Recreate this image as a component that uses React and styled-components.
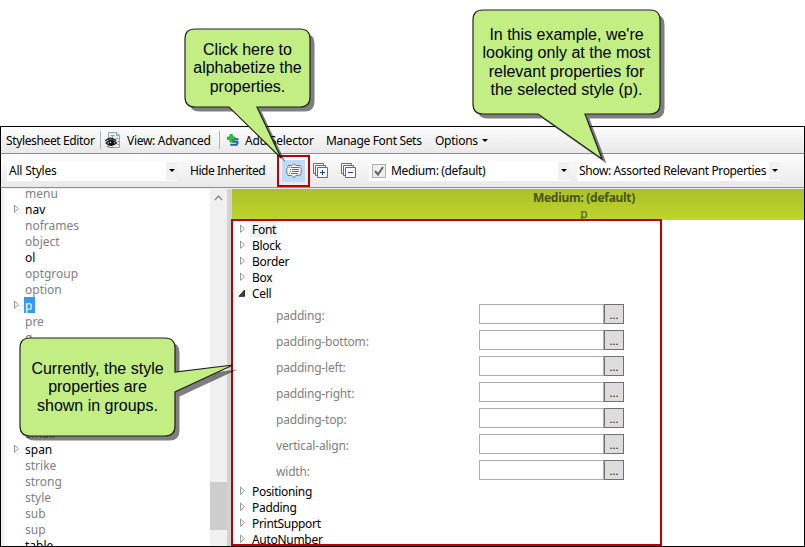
import React from "react";
import styled, { createGlobalStyle } from "styled-components";

const GlobalStyle = createGlobalStyle`
  * { box-sizing: border-box; }
  html, body { margin: 0; background: #fff; overflow: hidden; }
  body { font-family: "Noto Sans", "Open Sans", sans-serif; font-size: 12px; color: #000; }
`;

const Page = styled.main`
  position: relative;
  width: 805px;
  height: 547px;
  padding-top: 126px;
  overflow: hidden;
`;

const EditorWindow = styled.section`
  display: flex;
  flex-direction: column;
  height: 421px;
  border: 1px solid #000;
`;

const MenuBar = styled.header`
  display: flex;
  align-items: center;
  flex: none;
  height: 27px;
  padding-left: 5px;
  background: linear-gradient(#fdfdfd, #e9e9ea);
  border-bottom: 1px solid #8d8d8d;
`;

const ToolBar = styled.div`
  display: flex;
  align-items: center;
  flex: none;
  height: 34px;
  padding-left: 6px;
  background: linear-gradient(#fdfdfd, #e9e9ea);
  border-bottom: 1px solid #8d8d8d;
`;

const Text = styled.span`
  flex: none;
  width: ${(p) => (p.$w ? `${p.$w}px` : "auto")};
  margin-left: ${(p) => p.$gap || 0}px;
  padding-top: 1px;
  line-height: 16px;
  white-space: nowrap;
  letter-spacing: ${(p) => p.$track ?? -0.2}px;
`;

const Separator = styled.i`
  flex: none;
  width: 1px;
  height: 18px;
  margin-left: ${(p) => p.$gap}px;
  background: #a9b2bd;
`;

const Icon = styled.svg`
  flex: none;
  display: block;
  margin-left: ${(p) => p.$gap || 0}px;
`;

const Combo = styled.div`
  display: flex;
  align-items: center;
  flex: none;
  width: ${(p) => p.$w}px;
  height: 20px;
  margin-left: ${(p) => p.$gap || 0}px;
  padding-left: ${(p) => p.$pad}px;
  background: #fff;
`;

const DropButton = styled.span`
  display: flex;
  flex: none;
  justify-content: center;
  align-items: center;
  width: 11px;
  height: 18px;
  margin-left: auto;
  background: #f1f1f1;
`;

const Caret = styled.i`
  width: 0;
  height: 0;
  margin-left: ${(p) => p.$gap || 0}px;
  border: 3px solid transparent;
  border-top-color: #000;
  border-bottom: 0;
`;

const ActiveTool = styled.button`
  display: flex;
  flex: none;
  align-items: center;
  justify-content: center;
  width: 33px;
  height: 32px;
  margin-left: 12px;
  padding: 3px;
  border: 2px solid #c00000;
  background: #bfdcf7 content-box;
`;

const CheckBox = styled.span`
  flex: none;
  width: 14px;
  height: 14px;
  border: 1px solid #b0b0b0;
  background: #eee;
`;

const Body = styled.div`
  display: flex;
  flex: 1;
  min-height: 0;
  padding-top: 1px;
  background: #f3eff0;
`;

const StyleList = styled.ul`
  flex: none;
  width: 206px;
  margin: 0 0 0 3px;
  padding: 0;
  overflow: hidden;
  background: #fff;
  list-style: none;

  & > li:first-child { margin-top: -4px; }
`;

const StyleItem = styled.li`
  display: flex;
  height: 16px;
  padding-left: 8px;
  color: ${(p) => (p.$dark ? "#000" : "#808080")};
`;

const Gutter = styled.span`
  flex: none;
  width: ${(p) => p.$w}px;
  padding-top: ${(p) => p.$top}px;
`;

const StyleName = styled.span`
  height: 16px;
  padding: 0 ${(p) => (p.$selected ? 3 : 1)}px 0 1px;
  line-height: 18px;
  white-space: nowrap;
  color: ${(p) => (p.$selected ? "#fff" : "inherit")};
  background: ${(p) => (p.$selected ? "#3399ff" : "transparent")};
`;

const ScrollTrack = styled.div`
  display: flex;
  flex-direction: column;
  align-items: center;
  width: 17px;
  flex: none;
  background: #f0f0f0;
`;

const ScrollThumb = styled.div`
  width: 17px;
  height: 48px;
  margin-top: 281px;
  background: #cdcdcd;
`;

const Splitter = styled.div`
  flex: none;
  width: 5px;
  background: #d3d3d3;
`;

const Properties = styled.div`
  display: flex;
  flex: 1;
  flex-direction: column;
  min-width: 0;
  background: #fff;
`;

const MediumHeader = styled.div`
  flex: none;
  height: 31px;
  padding: 1px 0 0 132px;
  background: linear-gradient(#abc028, #bfd62d);
  color: #46540f;
  line-height: 16px;
  text-align: center;
`;

const MediumTitle = styled.div`
  font-weight: 700;
  letter-spacing: -0.28px;
`;

const GroupBox = styled.div`
  flex: 1;
  width: 431px;
  min-height: 0;
  margin: -1px 0 0 -1px;
  border: 2px solid #c00000;
  background: #fff;
  overflow: hidden;
`;

const GroupRow = styled.div`
  display: flex;
  height: 16px;
  padding-left: 5px;
`;

const GroupName = styled.span`
  padding: 0 1px;
  line-height: 18px;
  white-space: nowrap;
  letter-spacing: -0.3px;
  background: ${(p) => (p.$focused ? "#f0f0f0" : "transparent")};
`;

const PropertyRow = styled.div`
  display: flex;
  align-items: center;
  height: 26px;
  padding-left: 43px;
  color: #808080;
`;

const PropertyLabel = styled.label`
  width: 203px;
  padding-top: 3px;
  letter-spacing: -0.2px;
`;

const ValueInput = styled.input`
  width: 125px;
  height: 20px;
  padding: 0 4px;
  border: 1px solid #abadb3;
  border-radius: 0;
  outline: 0;
  background: #fff;
`;

const MoreButton = styled.button`
  width: 20px;
  height: 20px;
  padding: 0;
  border: 1px solid #707070;
  background: #ddd;
  color: #111;
  font: 11px/19px "Noto Sans", sans-serif;
`;

const Callout = styled.aside`
  position: absolute;
  left: ${(p) => p.$x}px;
  top: ${(p) => p.$y}px;
  display: flex;
  align-items: center;
  justify-content: center;
  width: ${(p) => p.$w}px;
  height: ${(p) => p.$h}px;
  font: 16px/18.5px "Liberation Sans", Arial, sans-serif;
  text-align: center;
  white-space: nowrap;
`;

const CalloutShape = styled.svg`
  position: absolute;
  left: 0;
  top: 0;
  overflow: visible;
`;

const CalloutText = styled.div`
  position: relative;
  padding-top: 1px;
`;

const Expander = ({ open }) => (
  <Icon width="8" height="10" viewBox="0 0 8 10">
    {open ? <path d="M1 8.3h5.5V2z" fill="#404040" stroke="#262626" /> : <path d="M2.5 1v7.4L6.4 4.7z" fill="#fff" stroke="#999" />}
  </Icon>
);

const ViewIcon = () => (
  <Icon $gap={4} width="16" height="17" viewBox="0 0 16 17">
    <path d="M3.5.5h8l3 3v12h-11z" fill="#e4eff2" stroke="#91a9b0" />
    <path d="M11.5.5v3h3M5.5 3.5h4M7.5 3.5v4M10.5 6.5h3M12 9.5h2M12 12.5h2" fill="none" stroke="#8ba5ad" />
    <path d="M0 8.2Q5 2.8 11.5 8L11 9.2Q5 5.8 0 9.4z" fill="#292522" />
    <path d="M.8 11Q6 6 11.5 11 6 15.6.8 11" fill="#ddd" stroke="#1c1917" strokeWidth="1.2" />
    <circle cx="6.3" cy="11" r="2.8" fill="#16130f" />
    <circle cx="5.5" cy="10.2" r=".8" fill="#ddd" />
    <path d="M1.5 14l2 1M5 15.5h4" stroke="#777" />
  </Icon>
);

const AddIcon = () => (
  <Icon $gap={7} width="13" height="13" viewBox="0 0 13 13">
    <path d="M11.5 5.2H6.2L5 6.7l1 1h4l.7 1-1 2.1H3.3" fill="none" stroke="#146b9c" strokeWidth="2" />
    <path d="M3 .5h2.4V3H8v2.4H5.4V8H3V5.4H.5V3H3z" fill="#31c64b" stroke="#159b2f" strokeWidth=".8" />
  </Icon>
);

const GroupIcon = () => (
  <Icon width="16" height="16" viewBox="0 0 16 16">
    <path d="M2 2.5h4L8 .7l2 1.8h4v2l1.2.8v5l-1.2.8v1.2h-4L8 15l-2-2.5H2v-1.2l-1.2-.8v-5L2 4.5z" fill="#fafafa" stroke="#7a7a7a" />
    <path d="M3 4.5h1M5 4.5h8M4 6.5h1M6 6.5h7M4 8.5h1M6 8.5h7M3 10.5h1M5 10.5h7" stroke="#6a6a6a" />
  </Icon>
);

const StackIcon = ({ gap, plus }) => (
  <Icon $gap={gap} width="16" height="16" viewBox="0 0 16 16">
    <path d="M.5.5h10v10H.5z" fill="#fff" stroke="#4169e1" />
    <path d="M2.5 2.5h10v10h-10z" fill="#fff" stroke="#4169e1" />
    <path d="M4.5 4.5h10v10h-10z" fill="#fff" stroke="#4169e1" />
    <path d={plus ? "M7 9.5h5M9.5 7v5" : "M7 9.5h5"} stroke="#1b3d9e" />
  </Icon>
);

const DropDown = () => (
  <DropButton>
    <Caret />
  </DropButton>
);

const styleNames = [
  ["menu"], ["nav", 1, 1], ["noframes"], ["object"], ["ol", 1], ["optgroup"], ["option"],
  ["p", 1, 1, 1], ["pre"], ["q"], ["s"], ["samp"], ["script"], ["section"], ["select"],
  ["small"], ["span", 1, 1], ["strike"], ["strong"], ["style"], ["sub"], ["sup"], ["table", 1],
];

const cellProperties = ["padding", "padding-bottom", "padding-left", "padding-right", "padding-top", "vertical-align", "width"];

const Group = ({ name, open, focused }) => (
  <GroupRow>
    <Gutter $w={13} $top={3}>
      <Expander open={open} />
    </Gutter>
    <GroupName $focused={focused}>{name}</GroupName>
  </GroupRow>
);

const Bubble = ({ x, y, w, h, path, lines }) => (
  <Callout $x={x} $y={y} $w={w} $h={h}>
    <CalloutShape width={w} height={h}>
      <path d={path} fill="rgba(0,0,0,.5)" transform="translate(4.5 4.5)" />
      <path d={path} fill="#c2ee84" stroke="#222" strokeWidth="1.2" />
    </CalloutShape>
    <CalloutText>
      {lines.map((line) => (
        <div key={line}>{line}</div>
      ))}
    </CalloutText>
  </Callout>
);

export default function App() {
  return (
    <Page>
      <GlobalStyle />
      <EditorWindow>
        <MenuBar>
          <Text $w={90} $track={-0.37}>Stylesheet Editor</Text>
          <Separator $gap={4} />
          <ViewIcon />
          <Text $gap={6} $w={84} $track={-0.3}>View: Advanced</Text>
          <Separator $gap={8} />
          <AddIcon />
          <Text $gap={5} $w={69}>Add Selector</Text>
          <Text $gap={12} $w={96} $track={-0.33}>Manage Font Sets</Text>
          <Text $gap={13} $w={43} $track={-0.25}>Options</Text>
          <Caret $gap={4} />
        </MenuBar>
        <ToolBar>
          <Combo $w={170} $pad={2}>
            <Text>All Styles</Text>
            <DropDown />
          </Combo>
          <Text $gap={13} $w={75} $track={-0.45}>Hide Inherited</Text>
          <ActiveTool aria-label="Alphabetize">
            <GroupIcon />
          </ActiveTool>
          <StackIcon gap={3} plus />
          <StackIcon gap={12} />
          <Combo $gap={12} $w={200} $pad={3}>
            <CheckBox>
              <svg width="12" height="12" viewBox="0 0 12 12" display="block">
                <path d="M2 6l3 3.5L10 2" fill="none" stroke="#666" strokeWidth="2" />
              </svg>
            </CheckBox>
            <Text $gap={5} $track={-0.35}>Medium: (default)</Text>
            <DropDown />
          </Combo>
          <Combo $gap={8} $w={203} $pad={2}>
            <Text $track={-0.37}>Show: Assorted Relevant Properties</Text>
            <DropDown />
          </Combo>
        </ToolBar>
        <Body>
          <StyleList>
            {styleNames.map(([name, dark, children, selected]) => (
              <StyleItem key={name} $dark={dark}>
                <Gutter $w={12} $top={3}>{children && <Expander />}</Gutter>
                <StyleName $selected={selected}>{name}</StyleName>
              </StyleItem>
            ))}
          </StyleList>
          <ScrollTrack>
            <svg width="9" height="12" viewBox="0 0 9 12">
              <path d="M1 11l3.5-4L8 11" fill="none" stroke="#888" strokeWidth="1.3" />
            </svg>
            <ScrollThumb />
          </ScrollTrack>
          <Splitter />
          <Properties>
            <MediumHeader>
              <MediumTitle>Medium: (default)</MediumTitle>
              p
            </MediumHeader>
            <GroupBox>
              <Group name="Font" focused />
              <Group name="Block" />
              <Group name="Border" />
              <Group name="Box" />
              <Group name="Cell" open />
              {cellProperties.map((name) => (
                <PropertyRow key={name}>
                  <PropertyLabel>{name}:</PropertyLabel>
                  <ValueInput aria-label={name} />
                  <MoreButton>...</MoreButton>
                </PropertyRow>
              ))}
              <Group name="Positioning" />
              <Group name="Padding" />
              <Group name="PrintSupport" />
              <Group name="AutoNumber" />
            </GroupBox>
          </Properties>
        </Body>
      </EditorWindow>
      <Bubble
        x={185} y={29} w={125} h={78}
        path="M10 0H115Q125 0 125 10V68Q125 78 115 78H72L96 129 44 78H10Q0 78 0 68V10Q0 0 10 0Z"
        lines={["Click here to", "alphabetize the", "properties."]}
      />
      <Bubble
        x={473} y={10} w={187} h={104}
        path="M10 0H177Q187 0 187 10V94Q187 104 177 104H112L129 149 65 104H10Q0 104 0 94V10Q0 0 10 0Z"
        lines={["In this example, we're", "looking only at the most", "relevant properties for", "the selected style (p)."]}
      />
      <Bubble
        x={20} y={338} w={155} h={98}
        path="M10 0H145Q155 0 155 10V34L213 27 155 54V88Q155 98 145 98H10Q0 98 0 88V10Q0 0 10 0Z"
        lines={["Currently, the style", "properties are", "shown in groups."]}
      />
    </Page>
  );
}
